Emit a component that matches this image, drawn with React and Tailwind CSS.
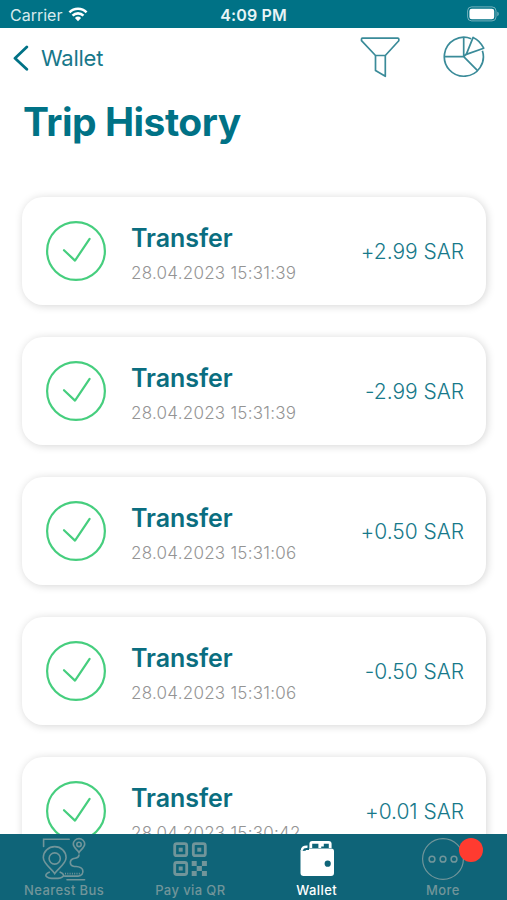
import React from "react";

const trips = [
  { id: 1, title: "Transfer", date: "28.04.2023 15:31:39", amount: "+2.99 SAR" },
  { id: 2, title: "Transfer", date: "28.04.2023 15:31:39", amount: "-2.99 SAR" },
  { id: 3, title: "Transfer", date: "28.04.2023 15:31:06", amount: "+0.50 SAR" },
  { id: 4, title: "Transfer", date: "28.04.2023 15:31:06", amount: "-0.50 SAR" },
  { id: 5, title: "Transfer", date: "28.04.2023 15:30:42", amount: "+0.01 SAR" },
];

function WifiIcon() {
  return (
    <svg className="w-[20px] h-[15px]" viewBox="0 0 22 16" fill="none" stroke="currentColor" strokeWidth="2.9">
      <path d="M1.6 5.6a13.3 13.3 0 0 1 18.8 0" />
      <path d="M5 9.2a8.5 8.5 0 0 1 12 0" />
      <path d="M11 15.4l-3.4-3.5a4.9 4.9 0 0 1 6.8 0z" fill="currentColor" stroke="none" />
    </svg>
  );
}

function BatteryIcon() {
  return (
    <svg className="w-8 h-4" viewBox="0 0 32 16">
      <rect x="0.6" y="0.9" width="28.4" height="14" rx="4" fill="none" stroke="#fff" strokeOpacity="0.45" />
      <rect x="2.4" y="2.7" width="24.8" height="10.6" rx="2.4" fill="#fff" />
      <path d="M30.4 5.8c1.7.6 1.7 3.8 0 4.4z" fill="#fff" fillOpacity="0.5" />
    </svg>
  );
}

function FilterIcon() {
  return (
    <svg
      className="w-10 h-11"
      viewBox="360 35.5 40 44"
      fill="none"
      stroke="#3a8b99"
      strokeWidth="1.7"
      strokeLinejoin="round"
    >
      <path d="M362.4 37.6h35.4q1 0 1 1v1.6L385.3 55h-9.8L361.5 40.2v-1.6q0-1 .9-1z" />
      <path d="M375.5 55v15l9.8 5.8V55" />
    </svg>
  );
}

function ChartIcon() {
  return (
    <svg
      className="w-11 h-11"
      viewBox="442 36 44 44"
      fill="none"
      stroke="#3a8b99"
      strokeWidth="1.7"
      strokeLinejoin="round"
    >
      <path d="M471.2 38.7A19.5 19.5 0 1 0 482.4 50.8" />
      <path d="M463.7 37.2v19.5h-19.4M463.7 56.7l13.6 13.6M463.7 56.7l2.6-2.6" />
      <path d="M466.3 54.4l6.8-17q7 3.2 10.6 10.8z" />
    </svg>
  );
}

function CheckIcon() {
  return (
    <svg className="w-[60px] h-[60px] shrink-0" viewBox="0 0 60 60" fill="none" stroke="#46ce7e" strokeWidth="2.2">
      <circle cx="30" cy="30" r="28.9" />
      <path d="M18 29.2l11 10.4L43.6 17.8" strokeLinecap="round" strokeLinejoin="round" />
    </svg>
  );
}

function NearestBusIcon() {
  return (
    <svg
      className="w-11 h-[46px]"
      viewBox="42 836 44 46"
      fill="none"
      stroke="currentColor"
      strokeWidth="1.6"
      strokeLinecap="round"
    >
      <path d="M43.6 846.5v-7.2h25.6" />
      <path d="M54.7 873.6c-2.7-4.7-11.4-9.6-11.4-16a11.4 11 0 0 1 22.8 0c0 6.4-8.7 11.3-11.4 16z" />
      <circle cx="54.7" cy="858.5" r="5.6" />
      <path d="M49.2 872.2c-5.8 2.4-4.2 6.2 5.5 6.2s11.3-3.8 5.5-6.2" />
      <path d="M79 852.6c-1.2-2.7-5.7-4.7-5.7-8.5a5.7 5.5 0 0 1 11.4 0c0 3.8-4.5 5.8-5.7 8.5z" />
      <circle cx="79" cy="844.4" r="2.2" />
      <path d="M79 855c-.2 3.6-3.2 2.8-6 3.8-3.6 1.3-3.7 6.6.4 7.4 3.3.7 8-.3 9.3 3.8 1 3.4-1.2 6.1-4.5 6.1H64.5" />
      <path d="M65 873.6h15" strokeDasharray="1 1.3" strokeLinecap="butt" />
      <path d="M67 879.7h17.6" />
    </svg>
  );
}

function QrIcon() {
  return (
    <svg className="w-11 h-[46px]" viewBox="169 836 44 46">
      <g fill="none" stroke="currentColor" strokeWidth="2.8">
        <rect x="175.7" y="843.7" width="12" height="12" rx="2" />
        <rect x="194.3" y="843.7" width="12" height="12" rx="2" />
        <rect x="175.7" y="862.5" width="12" height="12" rx="2" />
      </g>
      <g fill="currentColor">
        <rect x="179.7" y="847.7" width="4" height="4" />
        <rect x="198.3" y="847.7" width="4" height="4" />
        <rect x="179.7" y="866.5" width="4" height="4" />
        <rect x="192.7" y="861" width="5" height="5" />
        <rect x="202.9" y="861" width="5" height="5" />
        <rect x="197.7" y="866" width="5.2" height="5" />
        <rect x="192.7" y="871" width="5" height="5" />
        <rect x="202.9" y="871" width="5" height="5" />
      </g>
    </svg>
  );
}

function WalletIcon() {
  return (
    <svg className="w-11 h-[46px]" viewBox="295 836 44 46">
      <path
        d="M310.8 848v-4.2q0-1.5 1.5-1.5h16.4q1.5 0 1.5 1.5v4.2M319.8 848v-2.8h4"
        fill="none"
        stroke="currentColor"
        strokeWidth="2.8"
      />
      <path d="M307.5 846.8q-5.6-.4-5.6 4" fill="none" stroke="currentColor" strokeWidth="2.4" />
      <path
        d="M300.5 850q1.2 1 3 1l2.5-.6V850h3v-1.6h22.2q2.8 0 2.8 2.8V873q0 3-3 3h-27.4q-3.1 0-3.1-3z"
        fill="currentColor"
      />
      <circle cx="327.7" cy="863.7" r="3.1" fill="#0f6478" />
    </svg>
  );
}

function MoreIcon() {
  return (
    <svg className="w-11 h-[46px]" viewBox="421 836 44 46" fill="none" stroke="currentColor">
      <circle cx="443" cy="859" r="20.4" strokeWidth="1.2" />
      <g strokeWidth="1.5">
        <circle cx="432" cy="859.2" r="2.9" />
        <circle cx="443" cy="859.2" r="2.9" />
        <circle cx="454" cy="859.2" r="2.9" />
      </g>
    </svg>
  );
}

const tabs = [
  { label: "Nearest Bus", icon: NearestBusIcon },
  { label: "Pay via QR", icon: QrIcon },
  { label: "Wallet", icon: WalletIcon, active: true },
  { label: "More", icon: MoreIcon, badge: true },
];

function TripCard({ trip }) {
  return (
    <div className="flex items-center h-[108px] shrink-0 rounded-[21px] bg-white pl-6 pr-[22px] shadow-[1px_1px_9px_rgba(0,0,0,0.17)]">
      <CheckIcon />
      <div className="ml-[25px] pt-[7px] flex-1">
        <h2 className="text-[25px] leading-8 font-semibold tracking-[-0.05px] text-[#0b6e80]">{trip.title}</h2>
        <p className="mt-[5px] text-[17px] leading-7 font-light tracking-[0.25px] text-[#949494] whitespace-nowrap">
          {trip.date}
        </p>
      </div>
      <span className="pt-px text-[21px] font-light tracking-[-0.05px] text-[#17798a] whitespace-nowrap">
        {trip.amount}
      </span>
    </div>
  );
}

export default function App() {
  return (
    <div className="flex flex-col w-full h-[900px] overflow-hidden bg-white font-['Inter',sans-serif]">
      {/* Status bar */}
      <div className="grid grid-cols-3 items-center h-7 shrink-0 pl-[10px] pr-2 bg-[#007286] text-white">
        <div className="flex items-center gap-[6px] pt-px text-[16px]">
          <span className="text-[#d7eaed]">Carrier</span>
          <WifiIcon />
        </div>
        <span className="pt-px pr-[2px] text-center text-[16px] font-semibold tracking-[0.15px] text-[#e8f4f6]">
          4:09 PM
        </span>
        <div className="flex justify-end">
          <BatteryIcon />
        </div>
      </div>

      {/* Navigation */}
      <header className="flex items-center justify-between h-[60px] shrink-0 pl-3 pr-[21px]">
        <button className="flex items-center gap-3 text-[22px] tracking-[-0.25px] text-[#17788a]">
          <svg className="w-[17px] h-[26px]" viewBox="0 0 17 26" fill="none" stroke="#007286" strokeWidth="2.8">
            <path d="M14.8 2L3 13.2l11.8 11" strokeLinecap="round" strokeLinejoin="round" />
          </svg>
          Wallet
        </button>
        <div className="flex items-center gap-[42px]">
          <FilterIcon />
          <ChartIcon />
        </div>
      </header>
      <h1 className="h-[97px] shrink-0 pl-[23px] pt-[10px] text-[39px] leading-[48px] font-bold tracking-[-0.5px] text-[#007286]">
        Trip History
      </h1>

      {/* Trips */}
      <main className="flex flex-col flex-1 gap-[32.1px] min-h-0 overflow-hidden pt-3 pl-[22px] pr-[21px]">
        {trips.map((trip) => (
          <TripCard key={trip.id} trip={trip} />
        ))}
      </main>

      {/* Tab bar */}
      <nav className="grid grid-cols-4 h-[66px] shrink-0 px-px bg-[#0f6478]">
        {tabs.map(({ label, icon: Icon, active, badge }) => (
          <button
            key={label}
            className={`flex flex-col items-center pt-[2px] ${active ? "text-white" : "text-[#71959a]"}`}
          >
            <span className="relative">
              <Icon />
              {badge && <span className="absolute top-[2px] left-[38px] w-6 h-6 rounded-full bg-[#ff3b30]"></span>}
            </span>
            <span className="text-[13px] leading-4 font-medium tracking-[0.4px]">{label}</span>
          </button>
        ))}
      </nav>
    </div>
  );
}
